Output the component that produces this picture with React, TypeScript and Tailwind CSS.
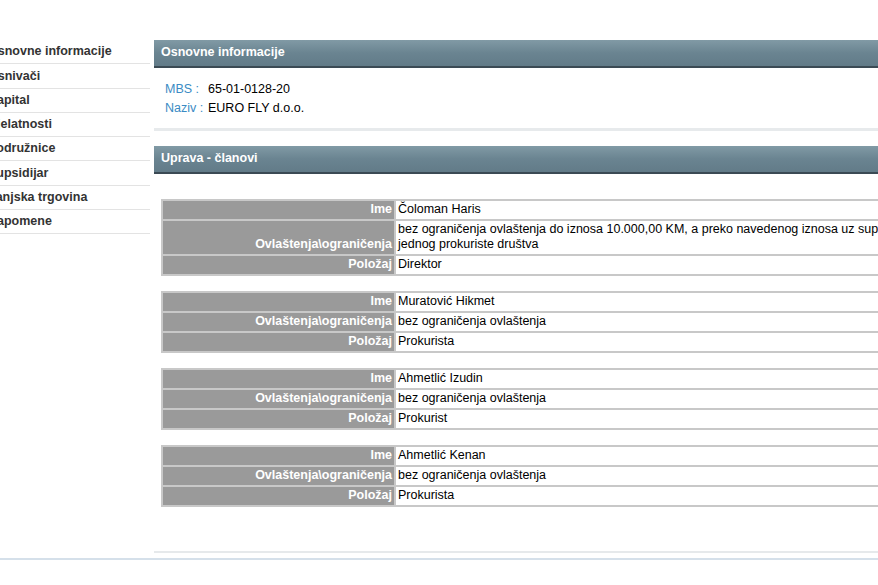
import React from 'react';

const nav = [
  'Osnovne informacije',
  'Osnivači',
  'Kapital',
  'Djelatnosti',
  'Podružnice',
  'Supsidijar',
  'Vanjska trgovina',
  'Napomene',
];

type Member = { ime: string; ovl: string; polozaj: string };

const members: Member[] = [
  {
    ime: 'Čoloman Haris',
    ovl: 'bez ograničenja ovlaštenja do iznosa 10.000,00 KM, a preko navedenog iznosa uz supotpis jednog prokuriste društva',
    polozaj: 'Direktor',
  },
  { ime: 'Muratović Hikmet', ovl: 'bez ograničenja ovlaštenja', polozaj: 'Prokurista' },
  { ime: 'Ahmetlić Izudin', ovl: 'bez ograničenja ovlaštenja', polozaj: 'Prokurist' },
  { ime: 'Ahmetlić Kenan', ovl: 'bez ograničenja ovlaštenja', polozaj: 'Prokurista' },
];

function SectionHeader({ title }: { title: string }) {
  return (
    <div className="h-[28px] bg-gradient-to-b from-[#819aa5] via-[#6a8491] to-[#627b88] border-b-2 border-[#3b4a54] pl-[7px] flex items-center">
      <span className="text-[12.5px] font-bold text-white leading-none -mt-[1px]">{title}</span>
    </div>
  );
}

function Row({ label, value }: { label: string; value: string }) {
  return (
    <tr>
      <td className="w-[231px] bg-[#9a9a9a] text-white font-bold text-[12.5px] text-right align-bottom pr-[2px] py-[1.5px] leading-[15px] whitespace-nowrap">
        {label}
      </td>
      <td className="bg-white text-black text-[12.5px] pl-[2px] py-[1.5px] leading-[15px]">{value}</td>
    </tr>
  );
}

export default function App() {
  return (
    <div
      className="w-[878px] h-[585px] overflow-hidden bg-white text-black"
      style={{ fontFamily: '"Liberation Sans", Arial, Helvetica, sans-serif' }}
    >
      <div className="flex w-[1100px]">
        {/* sidebar */}
        <div className="w-[162px] -ml-[12px] pt-[40px] shrink-0">
          {nav.map((n) => (
            <div
              key={n}
              className="h-[24.3px] border-b border-[#e3e3e3] flex items-center text-[12.5px] font-bold text-[#333] whitespace-nowrap"
            >
              {n}
            </div>
          ))}
        </div>

        {/* main */}
        <div className="ml-[4px] w-[934px] pt-[40px]">
          <SectionHeader title="Osnovne informacije" />
          <div className="pt-[12px] pl-[11px] text-[12.5px]">
            <div className="flex h-[19px] items-center">
              <span className="w-[43px] text-[#3a8bc4]">MBS :</span>
              <span>65-01-0128-20</span>
            </div>
            <div className="flex h-[19px] items-center">
              <span className="w-[43px] text-[#3a8bc4]">Naziv :</span>
              <span>EURO FLY d.o.o.</span>
            </div>
          </div>
          <div className="mt-[9.5px] h-[3px] bg-[#e7eaec]" />

          <div className="mt-[15px]">
            <SectionHeader title="Uprava - članovi" />
          </div>

          <div className="mt-[25px] pl-[7px] flex flex-col gap-[15px]">
            {members.map((m, i) => (
              <table key={i} className="w-[770px] bg-[#c8c8c8] border-separate border-spacing-[2px]">
                <tbody>
                  <Row label="Ime" value={m.ime} />
                  <Row label="Ovlaštenja\ograničenja" value={m.ovl} />
                  <Row label="Položaj" value={m.polozaj} />
                </tbody>
              </table>
            ))}
          </div>

          <div className="mt-[44px] h-[2px] bg-[#e6e9eb]" />
        </div>
      </div>
      <div className="mt-[5px] h-[2px] bg-[#d5e0ea]" />
    </div>
  );
}
